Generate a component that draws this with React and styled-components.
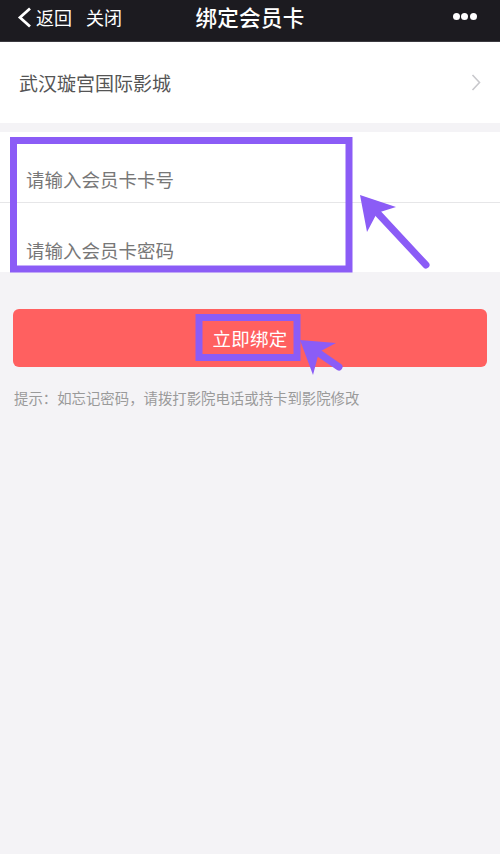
import styled, { createGlobalStyle } from "styled-components"

const GlobalStyle = createGlobalStyle`
  html, body {
    margin: 0;
    padding: 0;
    background-color: #f4f3f6;
  }
  body {
    font-family: "Noto Sans CJK SC", "Noto Sans", sans-serif;
  }
`

const Page = styled.div`
  position: relative;
  width: 500px;
  min-height: 854px;
  background-color: #f4f3f6;
  overflow: hidden;
`

const NavBar = styled.div`
  display: flex;
  align-items: flex-start;
  justify-content: space-between;
  height: 41px;
  padding: 0 17px;
  background-color: #1c1b20;
  border-bottom: 1px solid #3b3a40;
  color: #fff;
`

const NavLeft = styled.div`
  display: flex;
  align-items: center;
  height: 34px;
  width: 140px;
`

const NavLink = styled.span`
  font-size: 18px;
  line-height: 34px;
  margin-left: ${ props => props.gap || 0 }px;
`

const NavTitle = styled.div`
  font-size: 21.5px;
  line-height: 34px;
  font-weight: 500;
  letter-spacing: 0.3px;
`

const Dots = styled.div`
  display: flex;
  justify-content: flex-end;
  align-items: center;
  gap: 1.5px;
  width: 140px;
  height: 33px;
  padding-right: 6px;
  box-sizing: border-box;
`

const Dot = styled.span`
  width: 7px;
  height: 7px;
  border-radius: 50%;
  background-color: #fff;
`

const CinemaRow = styled.div`
  display: flex;
  align-items: center;
  justify-content: space-between;
  height: 81px;
  padding: 0 19px 0 19px;
  background-color: #fff;
`

const CinemaName = styled.span`
  font-size: 19px;
  color: #555;
`

const InputGroup = styled.div`
  margin-top: 9px;
  background-color: #fff;
`

const InputRow = styled.div`
  display: flex;
  align-items: flex-start;
  height: 70px;
  padding: 34px 0 0 26px;
  box-sizing: border-box;
  border-top: ${ props => props.divider ? "1px solid #e6e6e8" : "none" };
`

const Placeholder = styled.span`
  font-size: 18.5px;
  line-height: 26px;
  color: #777;
`

const ButtonWrap = styled.div`
  padding: 37px 13px 0;
`

const BindButton = styled.div`
  display: flex;
  justify-content: center;
  align-items: center;
  height: 58px;
  border-radius: 6px;
  background-color: #ff6060;
  color: #fff;
  font-size: 18.5px;
  letter-spacing: 0.3px;
`

const Hint = styled.div`
  margin-top: 20px;
  padding-left: 14px;
  font-size: 14.4px;
  line-height: 22px;
  color: #9a9a9a;
`

const Overlay = styled.svg`
  position: absolute;
  left: 0;
  top: 0;
  pointer-events: none;
`

const mark = "#8b5cf6"

function Annotations() {
  return (
    <Overlay width="500" height="854" viewBox="0 0 500 854">
      <rect x="13.5" y="140.5" width="335.5" height="128.5" fill="none" stroke={ mark } strokeWidth="7" />
      <line x1="426" y1="265" x2="372" y2="207" stroke={ mark } strokeWidth="7" strokeLinecap="round" />
      <polygon points="360,195 396,207 377,213 367,232" fill={ mark } />

      <rect x="199" y="317.5" width="98" height="40" fill="none" stroke={ mark } strokeWidth="7" />
      <line x1="339" y1="367" x2="310" y2="347" stroke={ mark } strokeWidth="7" strokeLinecap="round" />
      <polygon points="300,340 336,343 319,352 313,375" fill={ mark } />
    </Overlay>
  )
}

function App() {
  return (
    <Page>
      <GlobalStyle />
      <NavBar>
        <NavLeft>
          <svg width="16" height="21" viewBox="0 0 16 21">
            <polyline points="13,1.5 3,10.5 13,19.5" fill="none" stroke="#fff" strokeWidth="2.8" strokeLinejoin="miter" />
          </svg>
          <NavLink gap={ 3 }>返回</NavLink>
          <NavLink gap={ 14 }>关闭</NavLink>
        </NavLeft>
        <NavTitle>绑定会员卡</NavTitle>
        <Dots>
          <Dot /><Dot /><Dot />
        </Dots>
      </NavBar>

      <CinemaRow>
        <CinemaName>武汉璇宫国际影城</CinemaName>
        <svg width="10" height="17" viewBox="0 0 10 17">
          <polyline points="1.5,1 8.5,8.5 1.5,16" fill="none" stroke="#c8c8cc" strokeWidth="1.6" />
        </svg>
      </CinemaRow>

      <InputGroup>
        <InputRow><Placeholder>请输入会员卡卡号</Placeholder></InputRow>
        <InputRow divider><Placeholder>请输入会员卡密码</Placeholder></InputRow>
      </InputGroup>

      <ButtonWrap>
        <BindButton>立即绑定</BindButton>
      </ButtonWrap>

      <Hint>提示：如忘记密码，请拨打影院电话或持卡到影院修改</Hint>

      <Annotations />
    </Page>
  )
}

export default App
